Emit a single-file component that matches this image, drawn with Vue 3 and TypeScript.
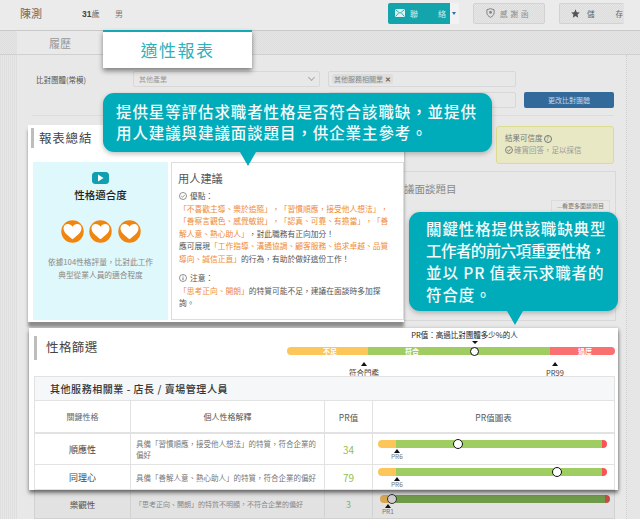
<template>
  <div class="page">
    <!-- dimmed page underneath -->
    <div class="base">
      <header class="top">
        <span class="name">陳測</span>
        <span class="age"><b>31</b>歲</span>
        <span class="sex">男</span>
        <div class="actions">
          <div class="contact">
            <span class="contact-main">
              <svg width="10" height="8" viewBox="0 0 10 8"><rect width="10" height="8" rx="1.500" fill="#dff3f4" /><path d="M1 1l4 3.200L9 1M1 7l2.600-3M9 7L6.400 4" fill="none" stroke="#14a9b0" stroke-width=".9" /></svg>
              <i>聯</i><i>絡</i>
            </span>
            <span class="contact-caret"></span>
          </div>
          <div class="ghost thanks">
            <svg width="9" height="10" viewBox="0 0 9 10"><path d="M4.500.6l3.600 1.200v3c0 2.200-1.600 3.600-3.600 4.500C2.500 8.400.9 7 .9 4.800v-3z" fill="none" stroke="#777" stroke-width=".9" /><circle cx="4.500" cy="4.200" r="1.500" fill="#888" /></svg>
            <i>感</i><i>謝</i><i>函</i>
          </div>
          <div class="ghost save">
            <svg width="9" height="9" viewBox="0 0 10 10"><path d="M5 .4l1.400 3.100 3.400.4-2.500 2.300.7 3.400L5 7.900 2 9.600l.7-3.400L.2 3.900l3.400-.4z" fill="#555" /></svg>
            <i>儲</i><i>存</i>
          </div>
        </div>
      </header>
      <nav class="tabs"><span class="tab">履歷</span></nav>
      <section class="content">
        <div class="form">
          <span class="form-label">比對團體(常模)</span>
          <div class="field select">其他產業<span class="chev"></span></div>
          <div class="form-side">
            <div class="field tagbox"><span class="tag">其他服務相關業 <b>✕</b></span></div>
            <div class="form-row">
              <div class="field blank"></div>
              <span class="change">更改比對團體</span>
            </div>
          </div>
        </div>
        <div class="sep"></div>
        <div class="lower">
          <div class="trust">
            <p>結果可信度<span class="q">?</span></p>
            <p class="ok"><svg width="8" height="8" viewBox="0 0 10 10"><circle cx="5" cy="5" r="4.300" fill="none" stroke="#666" /><path d="M2.800 5l1.600 1.600 2.800-3" fill="none" stroke="#666" /></svg>確實回答，足以採信</p>
          </div>
          <div class="interview">
            <h3>議面談題目</h3>
            <span class="more">...看更多面談題目</span>
          </div>
        </div>
      </section>
      <div class="dim-row">
        <span class="c1">樂觀性</span>
        <span class="c2">「思考正向、開朗」的特質不明顯，不符合企業的偏好</span>
        <span class="c3">3</span>
        <div class="c4">
          <div class="bar dark" style="--pos: 5%"><i class="lo" style="width: 4%"></i><i class="ok"></i><i class="hi"></i><em></em></div>
          <small class="pr pr1">PR1</small>
        </div>
      </div>
    </div>

    <!-- highlighted tab -->
    <div class="active-tab">適性報表</div>

    <!-- highlighted report summary -->
    <section class="summary">
      <h2 class="sec-title">報表總結</h2>
      <div class="summary-body">
        <div class="fit">
          <svg class="play" width="17" height="12" viewBox="0 0 17 12"><rect width="17" height="12" rx="3.500" fill="#0f9fb0" /><path d="M6 2.500l5.500 3.500L6 9.500z" fill="#fff" /></svg>
          <h4>性格適合度</h4>
          <div class="hearts">
            <svg v-for="n in 3" :key="n" width="23" height="23" viewBox="0 0 23 23">
              <circle cx="11.500" cy="11.500" r="11.200" fill="#f0860f" />
              <path d="M11.500 19.200C7 15.800 2.500 12.600 2.500 8.300 2.500 5.500 4.600 4 6.800 4c2 0 3.600 1 4.700 2.800C12.600 5 14.200 4 16.200 4c2.200 0 4.300 1.500 4.300 4.300 0 4.300-4.500 7.500-9 10.900z" fill="#fff" />
            </svg>
          </div>
          <p>依據104性格評量，比對此工作<br />典型從業人員的適合程度</p>
        </div>
        <div class="advice">
          <h4>用人建議</h4>
          <p class="head"><svg width="8" height="8" viewBox="0 0 10 10"><circle cx="5" cy="5" r="4.400" fill="none" stroke="#555" stroke-width=".8" /><path d="M2.800 5l1.600 1.600 2.800-3" fill="none" stroke="#555" stroke-width=".8" /></svg>優點：</p>
          <p class="lines">
            <span class="hl">「不喜歡主導、樂於追隨」，「習慣順應，接受他人想法」，</span><br />
            <span class="hl">「善察言觀色、感覺敏銳」，「認真、可靠、有擔當」，「善</span><br />
            <span class="hl">解人意、熱心助人」</span>，對此職務有正向加分！<br />
            應可展現<span class="hl">「工作指導、溝通協調、顧客服務、追求卓越、品質</span><br />
            <span class="hl">導向、誠信正直」</span>的行為，有助於做好這份工作！
          </p>
          <p class="head note"><svg width="8" height="8" viewBox="0 0 10 10"><circle cx="5" cy="5" r="4.400" fill="none" stroke="#555" stroke-width=".8" /><path d="M5 2.200v.9M5 4.200v3.400" fill="none" stroke="#555" /></svg>注意：</p>
          <p class="lines">
            <span class="hl">「思考正向、開朗」</span>的特質可能不足，建議在面談時多加探<br />詢。
          </p>
        </div>
      </div>
    </section>

    <!-- highlighted personality table -->
    <section class="screen">
      <div class="legend">
        <h2 class="sec-title">性格篩選</h2>
        <div class="legend-side">
          <p class="legend-cap">PR值：高過比對團體多少%的人</p>
          <div class="legend-bar">
            <span class="lb lo">不足</span><span class="lb ok">符合</span><span class="lb hi">過度</span>
            <em class="down"></em><em class="dot"></em>
          </div>
          <div class="legend-marks">
            <span class="mark m1">符合門檻</span>
            <span class="mark m2">PR99</span>
          </div>
        </div>
      </div>
      <div class="table">
        <div class="t-title">其他服務相關業 - 店長 / 賣場管理人員</div>
        <div class="t-row t-head">
          <span class="c1">關鍵性格</span>
          <span class="c2 center">個人性格解釋</span>
          <span class="c3 plain">PR值</span>
          <span class="c4 center">PR值圖表</span>
        </div>
        <div v-for="row in rows" :key="row.name" class="t-row body" :style="{ height: row.h + 'px' }">
          <span class="c1 strong">{{ row.name }}</span>
          <span class="c2">{{ row.text }}</span>
          <span class="c3">{{ row.pr }}</span>
          <div class="c4" :style="{ paddingTop: row.top + 'px' }">
            <div class="bar" :style="{ '--pos': row.pos + '%' }"><i class="lo" style="width: 8%"></i><i class="ok"></i><i class="hi"></i><em></em></div>
            <small class="pr">PR6</small>
          </div>
        </div>
      </div>
    </section>

    <!-- callouts -->
    <div class="callout one">提供星等評估求職者性格是否符合該職缺，並提供<br />用人建議與建議面談題目，供企業主參考。</div>
    <div class="callout two">關鍵性格提供該職缺典型<br /><span class="tight">工作者的前六項重要性格，</span><br />並以 PR 值表示求職者的<br />符合度。</div>
  </div>
</template>

<script setup lang="ts">
interface Row {
  name: string;
  text: string;
  pr: number;
  pos: number;
  h: number;
  top: number;
}

const rows: Row[] = [
  { name: "順應性", text: "具備「習慣順應，接受他人想法」的特質，符合企業的偏好", pr: 34, pos: 35, h: 31, top: 6 },
  { name: "同理心", text: "具備「善解人意、熱心助人」的特質，符合企業的偏好", pr: 79, pos: 78.2, h: 25, top: 3 },
];
</script>

<style>
html, body { margin: 0; background: #e6e6e6; }
</style>

<style scoped>
* { box-sizing: border-box; }
.page {
  position: relative;
  width: 640px;
  height: 519px;
  overflow: hidden;
  background: #e6e6e6;
  font-family: "Noto Sans CJK TC", "Liberation Sans", sans-serif;
  color: #555;
}
p, h2, h3, h4 { margin: 0; font-weight: 400; }
i, em { font-style: normal; }

.base {
  display: flex;
  flex-direction: column;
  height: 100%;
  background: repeating-linear-gradient(90deg, #dedede 0 1px, #e8e8e8 1px 2px) left top / 17px 100% no-repeat;
}
.top {
  display: flex;
  align-items: center;
  height: 31px;
  padding: 0 0 4px 20px;
  background: #ebebeb;
  border-bottom: 1px solid #c9c9c9;
  flex: none;
}
.name { font-size: 11px; width: 62px; color: #666; }
.age { font-size: 8px; width: 33px; color: #666; }
.age b { font-size: 8.500px; font-family: "Liberation Sans", sans-serif; color: #444; }
.sex { font-size: 8px; color: #777; }
.actions { margin-left: auto; display: flex; align-items: center; gap: 14px; padding-right: 16px; }
.contact { display: flex; height: 21px; }
.contact-main {
  display: flex;
  align-items: center;
  width: 62px;
  padding-left: 7px;
  gap: 5px;
  background: #13a5ab;
  border-radius: 2px 0 0 2px;
  color: #cfecee;
  font-size: 8px;
}
.contact-main i + i { margin-left: 15px; }
.contact-caret {
  position: relative;
  width: 9px;
  background: #f2f2f2;
  border-radius: 0 2px 2px 0;
}
.contact-caret::after {
  content: "";
  position: absolute;
  left: 2px;
  top: 9px;
  border: 2.500px solid transparent;
  border-top: 3px solid #2b6ea8;
  border-bottom: 0;
}
.ghost {
  display: flex;
  align-items: center;
  height: 21px;
  background: repeating-conic-gradient(#dcdcdc 0 25%, #e6e6e6 0 50%) 0 0 / 2px 2px;
  border: 1px solid #d2d2d2;
  border-radius: 2px;
  font-size: 7.500px;
  color: #8a8a8a;
}
.thanks { width: 72px; padding-left: 12px; gap: 5px; }
.thanks i + i { margin-left: -2px; }
.save { width: 65px; padding-left: 11px; gap: 7px; border-right: 0; color: #666; }
.save i + i { margin-left: 14px; }

.tabs {
  height: 24px;
  padding-left: 17px;
  background: repeating-conic-gradient(#dcdcdc 0 25%, #e6e6e6 0 50%) 0 0 / 2px 2px;
  border-bottom: 1px solid #d0d0d0;
  flex: none;
}
.tab {
  display: flex;
  align-items: center;
  justify-content: center;
  width: 86px;
  height: 23px;
  background: #e9e9e9;
  font-size: 11px;
  color: #999;
}
.content {
  margin: 0 13px 0 17px;
  padding: 16px 12px 0 19px;
  flex: 1;
  background: #e8e8e8;
  border-right: 1px dotted #cfcfcf;
}
.form { display: grid; grid-template-columns: 97px 187px 1fr; align-items: start; }
.form-label { font-size: 7.500px; color: #555; padding-top: 3px; }
.field {
  height: 16px;
  border: 1px solid #d8d8d8;
  border-radius: 2px;
  background: #e8e8e8;
}
.select {
  position: relative;
  font-size: 7px;
  line-height: 14px;
  padding-left: 5px;
  color: #999;
}
.chev {
  position: absolute;
  right: 5px;
  top: 3px;
  width: 5px;
  height: 5px;
  border-right: 1px solid #aaa;
  border-bottom: 1px solid #aaa;
  transform: rotate(45deg);
}
.form-side { display: flex; flex-direction: column; gap: 5px; padding-left: 8px; }
.tagbox { display: flex; align-items: center; width: 188px; padding: 0 3px; }
.tag {
  display: block;
  height: 10px;
  padding: 0 2px;
  background: #dedede;
  border-radius: 2px;
  font-size: 7px;
  line-height: 10px;
  color: #888;
}
.tag b { color: #666; }
.form-row { display: flex; gap: 8px; }
.blank { width: 188px; }
.change {
  width: 90px;
  height: 16px;
  background: #336a9c;
  border-radius: 2px;
  font-size: 7px;
  line-height: 16px;
  text-align: center;
  color: #c8d6e2;
}
.sep { height: 1px; background: #dcdcdc; margin: 7px 0 10px -4px; }
.lower { display: flex; flex-direction: column; align-items: flex-end; }
.trust {
  width: 118px;
  height: 38px;
  padding: 5px 8px;
  background: #e8e8c4;
  border: 1px solid #dcdc90;
  border-radius: 3px;
  font-size: 7.500px;
  line-height: 12px;
  color: #777;
}
.q {
  display: inline-block;
  width: 8px;
  height: 8px;
  margin-left: 1px;
  border: 1px solid #777;
  border-radius: 50%;
  font-size: 6px;
  line-height: 6px;
  text-align: center;
}
.trust .ok { display: flex; align-items: center; gap: 1px; color: #999; }
.interview {
  position: relative;
  width: 216px;
  height: 150px;
  margin-top: 7px;
  margin-right: -2px;
  padding: 9px 0 0 3px;
  border: 1px solid #d8d8d8;
}
.interview h3 { font-size: 10.500px; color: #888; }
.more {
  position: absolute;
  right: 5px;
  top: 28px;
  width: 59px;
  height: 12px;
  border: 1px solid #dcdcdc;
  font-size: 6px;
  line-height: 10px;
  text-align: center;
  white-space: nowrap;
  color: #777;
}
.dim-row {
  position: absolute;
  left: 34px;
  top: 490px;
  display: grid;
  grid-template-columns: 96px 194px 48px 243px;
  align-items: center;
  height: 29px;
  width: 581px;
  border: solid #d2d2d2;
  border-width: 0 1px 1px;
  background: #e2e2e2;
}
.dim-row > * { height: 100%; display: flex; align-items: center; }
.dim-row > :not(:last-child) { border-right: 1px solid #d2d2d2; }
.dim-row .c1 { font-size: 8.500px; color: #555; justify-content: center; }
.dim-row .c2 { font-size: 7px; color: #888; padding-left: 4px; white-space: nowrap; overflow: hidden; }
.dim-row .c3 { font-size: 9px; color: #8ab45e; justify-content: center; }
.dim-row .c4 { display: flex; flex-direction: column; align-items: stretch; padding: 5px 6px 0 7px; }

/* highlighted parts, laid over the dim page */
.active-tab {
  position: absolute;
  left: 103px;
  top: 30px;
  width: 149px;
  height: 38px;
  background: #fff;
  border-top: 2px solid #14a9b3;
  box-shadow: 0 3px 5px rgba(0, 0, 0, .45);
  font-size: 17px;
  letter-spacing: 1.500px;
  line-height: 35px;
  text-align: center;
  color: #2fb2bb;
}
.summary {
  position: absolute;
  left: 28px;
  top: 125px;
  width: 376px;
  height: 197px;
  padding: 0 0 2px 5px;
  background: #fff;
  box-shadow: 0 5px 3px rgba(0, 0, 0, .4);
}
.sec-title {
  height: 20px;
  padding-left: 5px;
  border-left: 3px solid #bdbdbd;
  font-size: 12.500px;
  letter-spacing: .8px;
  line-height: 20px;
  color: #444;
}
.summary .sec-title { margin: 3px 0 14px -2px; }
.summary-body { display: flex; gap: 3px; height: 158px; }
.fit {
  display: flex;
  flex-direction: column;
  align-items: center;
  width: 135px;
  padding-top: 10px;
  background: #dff8fc;
}
.play { display: block; }
.fit h4 { margin-top: 3px; font-size: 10.500px; font-weight: 500; color: #222; line-height: 15px; }
.hearts { display: flex; gap: 5.500px; margin-top: 18px; }
.fit p { margin-top: 12px; font-size: 7.700px; line-height: 13px; text-align: center; color: #888; }
.advice {
  flex: 1;
  padding: 6px 0 0 7px;
  border: 1px solid #ddd;
  font-size: 7.750px;
  line-height: 12.500px;
  color: #555;
}
.advice h4 { margin-left: -1px; font-size: 11.200px; line-height: 18px; color: #555; }
.head { display: flex; align-items: center; gap: 3px; margin-top: 3px; }
.note { margin-top: 7px; }
.lines { white-space: nowrap; }
.hl { color: #ef8a35; }

.screen {
  position: absolute;
  left: 29px;
  top: 328px;
  width: 589px;
  height: 162px;
  padding: 0 3px 0 5px;
  overflow: hidden;
  background: #fff;
  box-shadow: 0 3px 4px rgba(0, 0, 0, .5), 1px 0 3px rgba(0, 0, 0, .15);
}
.legend { display: flex; justify-content: space-between; height: 48px; }
.legend .sec-title { height: 24px; margin-top: 8px; padding-left: 9px; line-height: 22px; letter-spacing: .4px; }
.legend-side { width: 328px; }
.legend-cap {
  margin-left: 27px;
  width: 301px;
  font-size: 7.500px;
  line-height: 14px;
  text-align: center;
  color: #222;
}
.legend-bar { position: relative; display: flex; height: 8px; margin-top: 5px; }
.lb { font-size: 7px; font-weight: 700; line-height: 8px; color: #fff; }
.lb.lo { width: 81px; padding-left: 36px; background: #fcc65a; border-radius: 4px 0 0 4px; }
.lb.ok { width: 182px; padding-left: 37px; background: #9fcd62; }
.lb.hi { width: 65px; padding-left: 28px; background: #fa6f6f; border-radius: 0 4px 4px 0; }
.dot {
  position: absolute;
  left: 183px;
  top: -0.500px;
  width: 9px;
  height: 9px;
  background: #fff;
  border: 1px solid #111;
  border-radius: 50%;
}
.down {
  position: absolute;
  left: 184.500px;
  top: -6px;
  border: 3px solid transparent;
  border-top: 3px solid #111;
  border-bottom: 0;
}
.legend-marks { display: flex; position: relative; height: 20px; margin-top: 7px; }
.mark {
  position: absolute;
  padding-top: 5px;
  font-size: 7.500px;
  line-height: 11px;
  white-space: nowrap;
  color: #444;
  transform: translateX(-50%);
}
.mark::before, .pr::before {
  content: "";
  position: absolute;
  left: 50%;
  top: 0;
  margin-left: -3px;
  border: 3px solid transparent;
  border-bottom: 4px solid #111;
  border-top: 0;
}
.m1 { left: 77px; }
.m2 { left: 268px; }

.table { border: 1px solid #e2e2e2; border-bottom: 0; width: 581px; position: relative; z-index: 1; }
.t-title {
  height: 24px;
  padding-left: 15px;
  background: #f5f7f9;
  border-bottom: 1px solid #e2e2e2;
  font-size: 10px;
  font-weight: 500;
  letter-spacing: .55px;
  line-height: 23px;
  color: #333;
}
.t-row {
  display: grid;
  grid-template-columns: 96px 194px 48px 1fr;
  align-items: stretch;
  border-bottom: 1px solid #e2e2e2;
}
.t-head { height: 33px; border-bottom-width: 2px; }
.t-row > * { display: flex; align-items: center; border-right: 1px solid #e2e2e2; }
.t-row > :last-child { border-right: 0; }
.c1 { justify-content: center; font-size: 8px; color: #666; }
.c2 { padding: 0 5px; font-size: 7.500px; line-height: 11px; color: #777; }
.c2.center { justify-content: center; font-size: 8px; color: #555; }
.c3 { justify-content: center; font-size: 10px; color: #8fc050; }
.c3.plain { font-size: 8.500px; color: #555; }
.c4.center { justify-content: center; font-size: 8.500px; color: #555; }
.strong { font-size: 9px; color: #444; }
.body .c4 { flex-direction: column; align-items: stretch; padding-left: 5px; padding-right: 7px; }
.bar { position: relative; display: flex; height: 8px; flex: none; }
.bar i { display: block; height: 8px; }
.bar .lo { background: #fcc65a; border-radius: 4px 0 0 4px; }
.bar .ok { flex: 1; background: #9fcd62; }
.bar .hi { width: 5px; background: #f75555; border-radius: 0 4px 4px 0; }
.bar em {
  position: absolute;
  left: var(--pos);
  top: -1px;
  width: 10px;
  height: 10px;
  margin-left: -5px;
  background: #fff;
  border: 1px solid #111;
  border-radius: 50%;
}
.bar.dark .lo { background: #d9a650; }
.bar.dark .ok { background: #6f9a4a; }
.bar.dark .hi { background: #c94a4a; }
.bar.dark em { background: #cfcfcf; border-color: #333; }
.pr {
  position: relative;
  align-self: flex-start;
  margin: 1px 0 0 13px;
  padding-top: 3px;
  font-size: 6.500px;
  line-height: 8px;
  color: #777;
}
.pr1 { margin-left: 2px; }
</style>

<style scoped>
.callout {
  position: absolute;
  z-index: 3;
  background: #00acba;
  box-shadow: 0 2px 5px rgba(0, 0, 0, .25);
  font-size: 15.500px;
  font-weight: 500;
  letter-spacing: .9px;
  color: #f4fbfc;
  white-space: nowrap;
}
.callout::after {
  content: "";
  position: absolute;
  border: 8px solid transparent;
  border-top: 14px solid #00acba;
  border-bottom: 0;
  top: 100%;
}
.one {
  left: 103px;
  top: 93px;
  width: 389px;
  height: 59px;
  padding: 8px 0 0 13px;
  border-radius: 11px;
  line-height: 21px;
}
.one::after { left: 137px; }
.two {
  left: 409px;
  top: 212px;
  width: 209px;
  height: 99px;
  padding: 5px 0 0 17px;
  border-radius: 11px;
  line-height: 22px;
}
.two::after { left: 98px; }
.tight { letter-spacing: -.55px; }
</style>
